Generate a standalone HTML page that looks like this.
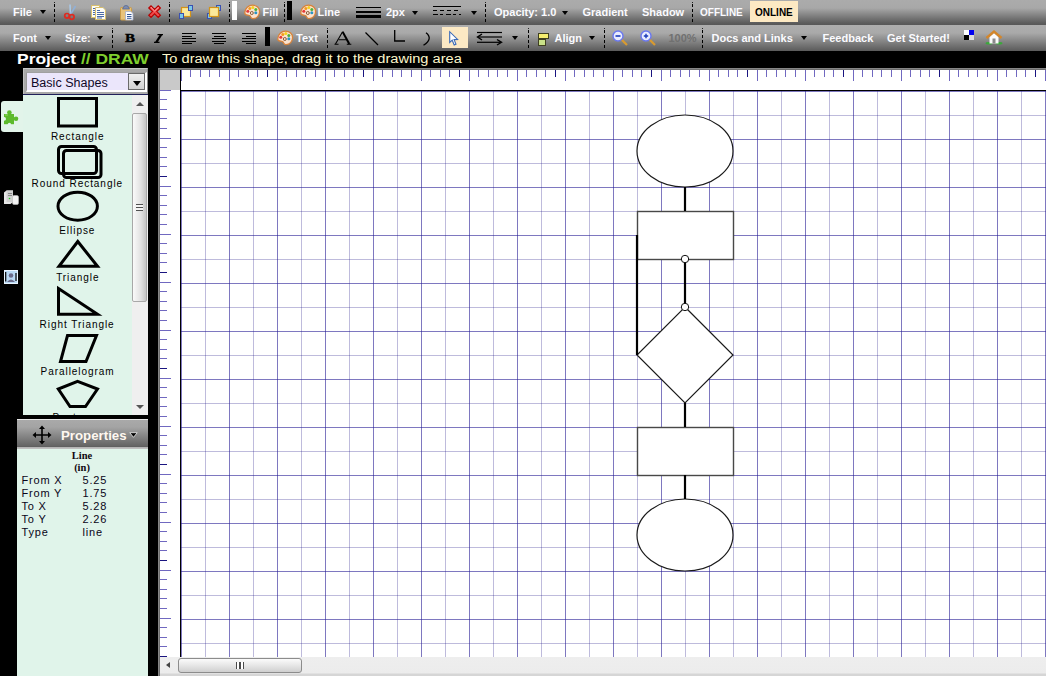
<!DOCTYPE html>
<html><head><meta charset="utf-8"><style>
*{margin:0;padding:0;box-sizing:border-box}
html,body{width:1046px;height:676px;overflow:hidden;background:#000;font-family:"Liberation Sans",sans-serif;position:relative}
.a{position:absolute}
.tb{position:absolute;left:0;width:1046px}
#tb1{top:0;height:25px;background:linear-gradient(#ababab 0px,#a8a8a8 8px,#5c5c5c 23px,#575757 25px)}
#tb2{top:25px;height:26px;background:linear-gradient(#adadad 0px,#a9a9a9 8px,#636363 24px,#5a5a5a 26px)}
.t{position:absolute;font-weight:bold;font-size:11px;color:#fbfbff;white-space:nowrap;line-height:13px}
.dd{position:absolute;width:0;height:0;border-left:3.5px solid transparent;border-right:3.5px solid transparent;border-top:4px solid #000}
.sep{position:absolute;width:1px;background:repeating-linear-gradient(#000 0 2px,rgba(0,0,0,0) 2px 4px)}
svg{position:absolute;overflow:visible}
.lbl{position:absolute;font-size:10px;letter-spacing:0.95px;color:#000;white-space:nowrap;line-height:11px;text-align:center}
.pr{position:absolute;font-size:11px;color:#0a0418;white-space:nowrap;line-height:13px;letter-spacing:0.8px}
</style></head><body>
<div class="tb" id="tb1"></div><div class="tb" id="tb2"></div>
<div class="a" style="left:158px;top:68px;width:888px;height:608px;background:#6e6e6e;border-left:1px solid #868686;border-top:1px solid #868686"></div><div class="a" style="left:160px;top:70px;width:20px;height:20px;background:#c9c9c9"></div><div class="a" style="left:180px;top:70px;width:866px;height:20px;background:#fff"></div><div class="a" style="left:160px;top:90px;width:20px;height:567px;background:#fff"></div><div class="a" style="left:180px;top:90px;width:866px;height:567px;background:#fff"></div><svg class="a" style="left:0;top:0" width="1046" height="676" shape-rendering="crispEdges"><rect x="181" y="91" width="1" height="566" fill="rgba(40,30,150,0.6)"/><rect x="205" y="91" width="1" height="566" fill="rgba(40,30,140,0.3)"/><rect x="229" y="91" width="1" height="566" fill="rgba(40,30,150,0.6)"/><rect x="253" y="91" width="1" height="566" fill="rgba(40,30,140,0.3)"/><rect x="277" y="91" width="1" height="566" fill="rgba(40,30,150,0.6)"/><rect x="301" y="91" width="1" height="566" fill="rgba(40,30,140,0.3)"/><rect x="325" y="91" width="1" height="566" fill="rgba(40,30,150,0.6)"/><rect x="349" y="91" width="1" height="566" fill="rgba(40,30,140,0.3)"/><rect x="373" y="91" width="1" height="566" fill="rgba(40,30,150,0.6)"/><rect x="397" y="91" width="1" height="566" fill="rgba(40,30,140,0.3)"/><rect x="421" y="91" width="1" height="566" fill="rgba(40,30,150,0.6)"/><rect x="445" y="91" width="1" height="566" fill="rgba(40,30,140,0.3)"/><rect x="469" y="91" width="1" height="566" fill="rgba(40,30,150,0.6)"/><rect x="493" y="91" width="1" height="566" fill="rgba(40,30,140,0.3)"/><rect x="517" y="91" width="1" height="566" fill="rgba(40,30,150,0.6)"/><rect x="541" y="91" width="1" height="566" fill="rgba(40,30,140,0.3)"/><rect x="565" y="91" width="1" height="566" fill="rgba(40,30,150,0.6)"/><rect x="589" y="91" width="1" height="566" fill="rgba(40,30,140,0.3)"/><rect x="613" y="91" width="1" height="566" fill="rgba(40,30,150,0.6)"/><rect x="637" y="91" width="1" height="566" fill="rgba(40,30,140,0.3)"/><rect x="661" y="91" width="1" height="566" fill="rgba(40,30,150,0.6)"/><rect x="685" y="91" width="1" height="566" fill="rgba(40,30,140,0.3)"/><rect x="709" y="91" width="1" height="566" fill="rgba(40,30,150,0.6)"/><rect x="733" y="91" width="1" height="566" fill="rgba(40,30,140,0.3)"/><rect x="757" y="91" width="1" height="566" fill="rgba(40,30,150,0.6)"/><rect x="781" y="91" width="1" height="566" fill="rgba(40,30,140,0.3)"/><rect x="805" y="91" width="1" height="566" fill="rgba(40,30,150,0.6)"/><rect x="829" y="91" width="1" height="566" fill="rgba(40,30,140,0.3)"/><rect x="853" y="91" width="1" height="566" fill="rgba(40,30,150,0.6)"/><rect x="877" y="91" width="1" height="566" fill="rgba(40,30,140,0.3)"/><rect x="901" y="91" width="1" height="566" fill="rgba(40,30,150,0.6)"/><rect x="925" y="91" width="1" height="566" fill="rgba(40,30,140,0.3)"/><rect x="949" y="91" width="1" height="566" fill="rgba(40,30,150,0.6)"/><rect x="973" y="91" width="1" height="566" fill="rgba(40,30,140,0.3)"/><rect x="997" y="91" width="1" height="566" fill="rgba(40,30,150,0.6)"/><rect x="1021" y="91" width="1" height="566" fill="rgba(40,30,140,0.3)"/><rect x="1045" y="91" width="1" height="566" fill="rgba(40,30,150,0.6)"/><rect x="181" y="91" width="865" height="1" fill="rgba(40,30,150,0.6)"/><rect x="181" y="115" width="865" height="1" fill="rgba(40,30,140,0.3)"/><rect x="181" y="139" width="865" height="1" fill="rgba(40,30,150,0.6)"/><rect x="181" y="163" width="865" height="1" fill="rgba(40,30,140,0.3)"/><rect x="181" y="187" width="865" height="1" fill="rgba(40,30,150,0.6)"/><rect x="181" y="211" width="865" height="1" fill="rgba(40,30,140,0.3)"/><rect x="181" y="235" width="865" height="1" fill="rgba(40,30,150,0.6)"/><rect x="181" y="259" width="865" height="1" fill="rgba(40,30,140,0.3)"/><rect x="181" y="283" width="865" height="1" fill="rgba(40,30,150,0.6)"/><rect x="181" y="307" width="865" height="1" fill="rgba(40,30,140,0.3)"/><rect x="181" y="331" width="865" height="1" fill="rgba(40,30,150,0.6)"/><rect x="181" y="355" width="865" height="1" fill="rgba(40,30,140,0.3)"/><rect x="181" y="379" width="865" height="1" fill="rgba(40,30,150,0.6)"/><rect x="181" y="403" width="865" height="1" fill="rgba(40,30,140,0.3)"/><rect x="181" y="427" width="865" height="1" fill="rgba(40,30,150,0.6)"/><rect x="181" y="451" width="865" height="1" fill="rgba(40,30,140,0.3)"/><rect x="181" y="475" width="865" height="1" fill="rgba(40,30,150,0.6)"/><rect x="181" y="499" width="865" height="1" fill="rgba(40,30,140,0.3)"/><rect x="181" y="523" width="865" height="1" fill="rgba(40,30,150,0.6)"/><rect x="181" y="547" width="865" height="1" fill="rgba(40,30,140,0.3)"/><rect x="181" y="571" width="865" height="1" fill="rgba(40,30,150,0.6)"/><rect x="181" y="595" width="865" height="1" fill="rgba(40,30,140,0.3)"/><rect x="181" y="619" width="865" height="1" fill="rgba(40,30,150,0.6)"/><rect x="181" y="643" width="865" height="1" fill="rgba(40,30,140,0.3)"/><rect x="181" y="70" width="1" height="11" fill="#7068c0"/><rect x="190" y="70" width="1" height="7" fill="#7068c0"/><rect x="200" y="70" width="1" height="7" fill="#7068c0"/><rect x="209" y="70" width="1" height="7" fill="#7068c0"/><rect x="219" y="70" width="1" height="7" fill="#7068c0"/><rect x="229" y="70" width="1" height="11" fill="#7068c0"/><rect x="238" y="70" width="1" height="7" fill="#7068c0"/><rect x="248" y="70" width="1" height="7" fill="#7068c0"/><rect x="257" y="70" width="1" height="7" fill="#7068c0"/><rect x="267" y="70" width="1" height="7" fill="#1a1480"/><rect x="277" y="70" width="1" height="11" fill="#7068c0"/><rect x="286" y="70" width="1" height="7" fill="#7068c0"/><rect x="296" y="70" width="1" height="7" fill="#7068c0"/><rect x="305" y="70" width="1" height="7" fill="#7068c0"/><rect x="315" y="70" width="1" height="7" fill="#7068c0"/><rect x="325" y="70" width="1" height="11" fill="#7068c0"/><rect x="334" y="70" width="1" height="7" fill="#7068c0"/><rect x="344" y="70" width="1" height="7" fill="#7068c0"/><rect x="353" y="70" width="1" height="7" fill="#7068c0"/><rect x="363" y="70" width="1" height="7" fill="#1a1480"/><rect x="373" y="70" width="1" height="11" fill="#7068c0"/><rect x="382" y="70" width="1" height="7" fill="#7068c0"/><rect x="392" y="70" width="1" height="7" fill="#7068c0"/><rect x="401" y="70" width="1" height="7" fill="#7068c0"/><rect x="411" y="70" width="1" height="7" fill="#7068c0"/><rect x="421" y="70" width="1" height="11" fill="#7068c0"/><rect x="430" y="70" width="1" height="7" fill="#7068c0"/><rect x="440" y="70" width="1" height="7" fill="#7068c0"/><rect x="449" y="70" width="1" height="7" fill="#7068c0"/><rect x="459" y="70" width="1" height="7" fill="#1a1480"/><rect x="469" y="70" width="1" height="11" fill="#7068c0"/><rect x="478" y="70" width="1" height="7" fill="#7068c0"/><rect x="488" y="70" width="1" height="7" fill="#7068c0"/><rect x="497" y="70" width="1" height="7" fill="#7068c0"/><rect x="507" y="70" width="1" height="7" fill="#7068c0"/><rect x="517" y="70" width="1" height="11" fill="#7068c0"/><rect x="526" y="70" width="1" height="7" fill="#7068c0"/><rect x="536" y="70" width="1" height="7" fill="#7068c0"/><rect x="545" y="70" width="1" height="7" fill="#7068c0"/><rect x="555" y="70" width="1" height="7" fill="#1a1480"/><rect x="565" y="70" width="1" height="11" fill="#7068c0"/><rect x="574" y="70" width="1" height="7" fill="#7068c0"/><rect x="584" y="70" width="1" height="7" fill="#7068c0"/><rect x="593" y="70" width="1" height="7" fill="#7068c0"/><rect x="603" y="70" width="1" height="7" fill="#7068c0"/><rect x="613" y="70" width="1" height="11" fill="#7068c0"/><rect x="622" y="70" width="1" height="7" fill="#7068c0"/><rect x="632" y="70" width="1" height="7" fill="#7068c0"/><rect x="641" y="70" width="1" height="7" fill="#7068c0"/><rect x="651" y="70" width="1" height="7" fill="#1a1480"/><rect x="661" y="70" width="1" height="11" fill="#7068c0"/><rect x="670" y="70" width="1" height="7" fill="#7068c0"/><rect x="680" y="70" width="1" height="7" fill="#7068c0"/><rect x="689" y="70" width="1" height="7" fill="#7068c0"/><rect x="699" y="70" width="1" height="7" fill="#7068c0"/><rect x="709" y="70" width="1" height="11" fill="#7068c0"/><rect x="718" y="70" width="1" height="7" fill="#7068c0"/><rect x="728" y="70" width="1" height="7" fill="#7068c0"/><rect x="737" y="70" width="1" height="7" fill="#7068c0"/><rect x="747" y="70" width="1" height="7" fill="#1a1480"/><rect x="757" y="70" width="1" height="11" fill="#7068c0"/><rect x="766" y="70" width="1" height="7" fill="#7068c0"/><rect x="776" y="70" width="1" height="7" fill="#7068c0"/><rect x="785" y="70" width="1" height="7" fill="#7068c0"/><rect x="795" y="70" width="1" height="7" fill="#7068c0"/><rect x="805" y="70" width="1" height="11" fill="#7068c0"/><rect x="814" y="70" width="1" height="7" fill="#7068c0"/><rect x="824" y="70" width="1" height="7" fill="#7068c0"/><rect x="833" y="70" width="1" height="7" fill="#7068c0"/><rect x="843" y="70" width="1" height="7" fill="#1a1480"/><rect x="853" y="70" width="1" height="11" fill="#7068c0"/><rect x="862" y="70" width="1" height="7" fill="#7068c0"/><rect x="872" y="70" width="1" height="7" fill="#7068c0"/><rect x="881" y="70" width="1" height="7" fill="#7068c0"/><rect x="891" y="70" width="1" height="7" fill="#7068c0"/><rect x="901" y="70" width="1" height="11" fill="#7068c0"/><rect x="910" y="70" width="1" height="7" fill="#7068c0"/><rect x="920" y="70" width="1" height="7" fill="#7068c0"/><rect x="929" y="70" width="1" height="7" fill="#7068c0"/><rect x="939" y="70" width="1" height="7" fill="#1a1480"/><rect x="949" y="70" width="1" height="11" fill="#7068c0"/><rect x="958" y="70" width="1" height="7" fill="#7068c0"/><rect x="968" y="70" width="1" height="7" fill="#7068c0"/><rect x="977" y="70" width="1" height="7" fill="#7068c0"/><rect x="987" y="70" width="1" height="7" fill="#7068c0"/><rect x="997" y="70" width="1" height="11" fill="#7068c0"/><rect x="1006" y="70" width="1" height="7" fill="#7068c0"/><rect x="1016" y="70" width="1" height="7" fill="#7068c0"/><rect x="1025" y="70" width="1" height="7" fill="#7068c0"/><rect x="1035" y="70" width="1" height="7" fill="#1a1480"/><rect x="1045" y="70" width="1" height="11" fill="#7068c0"/><rect x="160" y="90" width="11" height="1" fill="#7068c0"/><rect x="160" y="99" width="7" height="1" fill="#7068c0"/><rect x="160" y="109" width="7" height="1" fill="#7068c0"/><rect x="160" y="118" width="7" height="1" fill="#7068c0"/><rect x="160" y="128" width="7" height="1" fill="#7068c0"/><rect x="160" y="138" width="11" height="1" fill="#7068c0"/><rect x="160" y="147" width="7" height="1" fill="#7068c0"/><rect x="160" y="157" width="7" height="1" fill="#7068c0"/><rect x="160" y="166" width="7" height="1" fill="#7068c0"/><rect x="160" y="176" width="7" height="1" fill="#1a1480"/><rect x="160" y="186" width="11" height="1" fill="#7068c0"/><rect x="160" y="195" width="7" height="1" fill="#7068c0"/><rect x="160" y="205" width="7" height="1" fill="#7068c0"/><rect x="160" y="214" width="7" height="1" fill="#7068c0"/><rect x="160" y="224" width="7" height="1" fill="#7068c0"/><rect x="160" y="234" width="11" height="1" fill="#7068c0"/><rect x="160" y="243" width="7" height="1" fill="#7068c0"/><rect x="160" y="253" width="7" height="1" fill="#7068c0"/><rect x="160" y="262" width="7" height="1" fill="#7068c0"/><rect x="160" y="272" width="7" height="1" fill="#1a1480"/><rect x="160" y="282" width="11" height="1" fill="#7068c0"/><rect x="160" y="291" width="7" height="1" fill="#7068c0"/><rect x="160" y="301" width="7" height="1" fill="#7068c0"/><rect x="160" y="310" width="7" height="1" fill="#7068c0"/><rect x="160" y="320" width="7" height="1" fill="#7068c0"/><rect x="160" y="330" width="11" height="1" fill="#7068c0"/><rect x="160" y="339" width="7" height="1" fill="#7068c0"/><rect x="160" y="349" width="7" height="1" fill="#7068c0"/><rect x="160" y="358" width="7" height="1" fill="#7068c0"/><rect x="160" y="368" width="7" height="1" fill="#1a1480"/><rect x="160" y="378" width="11" height="1" fill="#7068c0"/><rect x="160" y="387" width="7" height="1" fill="#7068c0"/><rect x="160" y="397" width="7" height="1" fill="#7068c0"/><rect x="160" y="406" width="7" height="1" fill="#7068c0"/><rect x="160" y="416" width="7" height="1" fill="#7068c0"/><rect x="160" y="426" width="11" height="1" fill="#7068c0"/><rect x="160" y="435" width="7" height="1" fill="#7068c0"/><rect x="160" y="445" width="7" height="1" fill="#7068c0"/><rect x="160" y="454" width="7" height="1" fill="#7068c0"/><rect x="160" y="464" width="7" height="1" fill="#1a1480"/><rect x="160" y="474" width="11" height="1" fill="#7068c0"/><rect x="160" y="483" width="7" height="1" fill="#7068c0"/><rect x="160" y="493" width="7" height="1" fill="#7068c0"/><rect x="160" y="502" width="7" height="1" fill="#7068c0"/><rect x="160" y="512" width="7" height="1" fill="#7068c0"/><rect x="160" y="522" width="11" height="1" fill="#7068c0"/><rect x="160" y="531" width="7" height="1" fill="#7068c0"/><rect x="160" y="541" width="7" height="1" fill="#7068c0"/><rect x="160" y="550" width="7" height="1" fill="#7068c0"/><rect x="160" y="560" width="7" height="1" fill="#1a1480"/><rect x="160" y="570" width="11" height="1" fill="#7068c0"/><rect x="160" y="579" width="7" height="1" fill="#7068c0"/><rect x="160" y="589" width="7" height="1" fill="#7068c0"/><rect x="160" y="598" width="7" height="1" fill="#7068c0"/><rect x="160" y="608" width="7" height="1" fill="#7068c0"/><rect x="160" y="618" width="11" height="1" fill="#7068c0"/><rect x="160" y="627" width="7" height="1" fill="#7068c0"/><rect x="160" y="637" width="7" height="1" fill="#7068c0"/><rect x="160" y="646" width="7" height="1" fill="#7068c0"/><rect x="160" y="656" width="7" height="1" fill="#1a1480"/><rect x="180" y="70" width="1" height="587" fill="#000"/><rect x="180" y="90" width="866" height="1" fill="#000"/></svg><svg class="a" style="left:0;top:0" width="1046" height="676"><g fill="#fff" stroke="#1a1a1a" stroke-width="1.2"><ellipse cx="685" cy="151" rx="48" ry="36"/><ellipse cx="685" cy="535" rx="48" ry="36"/><polygon points="685,307 733,355 685,403 637,355"/></g><g fill="#fff" stroke="#484848" stroke-width="1.4"><rect x="637.5" y="211.5" width="96" height="48"/><rect x="637.5" y="427.5" width="96" height="48"/></g><g stroke="#000" stroke-width="2.2" fill="none"><line x1="685" y1="187" x2="685" y2="211"/><line x1="685" y1="259" x2="685" y2="307"/><line x1="637" y1="235" x2="637" y2="355"/><line x1="685" y1="403" x2="685" y2="427"/><line x1="685" y1="475" x2="685" y2="499"/></g><g fill="#fff" stroke="#111" stroke-width="1"><circle cx="685" cy="259" r="3.7"/><circle cx="685" cy="307" r="3.7"/></g></svg><div class="a" style="left:160px;top:657px;width:886px;height:19px;background:linear-gradient(#eeeeee 0,#ececec 16px,#d6d6d6 17px,#d6d6d6 19px)"></div><div class="a" style="left:166px;top:662px;width:0;height:0;border-top:3.5px solid transparent;border-bottom:3.5px solid transparent;border-right:4px solid #444"></div><div class="a" style="left:178px;top:658px;width:124px;height:15px;border:1px solid #8c8c8c;border-radius:3px;background:linear-gradient(#fbfbfb,#e6e6e6 50%,#cfcfcf)"></div><div class="a" style="left:236px;top:662px;width:8px;height:7px;background:repeating-linear-gradient(90deg,#4a4a4a 0 1.5px,#fff 1.5px 3.3px)"></div>
<div class="t" style="left:13px;top:5.5px;">File</div><div class="dd" style="left:39.5px;top:10px"></div><div class="a" style="left:54px;top:2px;width:1px;height:1px;background:#222"></div><div class="a" style="left:54px;top:4px;width:1px;height:3px;background:#000"></div><div class="a" style="left:54px;top:9px;width:1px;height:3px;background:#000"></div><div class="a" style="left:54px;top:14px;width:1px;height:3px;background:#000"></div><div class="a" style="left:54px;top:19px;width:1px;height:3px;background:#000"></div><svg style="left:64px;top:4px" width="13" height="16" viewBox="0 0 13 16"><path d="M6 0.5 L6.5 11" stroke="#a8c8e8" stroke-width="1.6"/><path d="M11.5 2 L6.5 10.5" stroke="#8fb0d8" stroke-width="1.6"/><circle cx="3" cy="11.8" r="2.3" fill="none" stroke="#e02a20" stroke-width="1.7"/><circle cx="7.8" cy="13" r="2.3" fill="none" stroke="#e02a20" stroke-width="1.7"/></svg><svg style="left:91px;top:5px" width="15" height="15" viewBox="0 0 15 15"><rect x="0.5" y="0.5" width="8" height="12" fill="#fdfdf6" stroke="#d8c070" stroke-width="1"/><path d="M4.5 2.5 H12 L14.5 5 V14.5 H4.5 Z" fill="#fdfdf6" stroke="#d8c070" stroke-width="1"/><path d="M2 3.5H4M2 5.5H4M2 7.5H4M2 9.5H4M6 5.5H9M6 7.5H13M6 9.5H13M6 11.5H13M6 13H11" stroke="#4a6aa8" stroke-width="1"/></svg><svg style="left:120px;top:5px" width="14" height="16" viewBox="0 0 14 16"><rect x="0.5" y="2.5" width="11" height="12.5" rx="1" fill="#e8c27a" stroke="#c89a48" stroke-width="1"/><path d="M3.5 2.5 Q3.5 0.5 6 0.5 Q8.5 0.5 8.5 2.5 L9.5 4 H2.5 Z" fill="#7c8cb0" stroke="#5a6a90" stroke-width="0.8"/><path d="M5.5 6.5 H11 L13 8.5 V15 H5.5 Z" fill="#fafcff" stroke="#a8b0c8" stroke-width="0.8"/><path d="M7 9.5H11.5M7 11.5H11.5M7 13.3H11.5" stroke="#3a5a98" stroke-width="1"/></svg><svg style="left:148px;top:5px" width="14" height="14" viewBox="0 0 14 14"><path d="M0.8 3 L3 0.8 L6.6 4.4 L10.2 0.8 L12.4 3 L8.8 6.6 L12.4 10.2 L10.2 12.4 L6.6 8.8 L3 12.4 L0.8 10.2 L4.4 6.6 Z" fill="#f04a4a" stroke="#b80000" stroke-width="1.2"/><path d="M2.5 3 L3 2.5 L6.6 6 L10.2 2.5 L10.8 3" fill="none" stroke="#ffb0b0" stroke-width="1"/></svg><div class="a" style="left:169px;top:2px;width:1px;height:1px;background:#222"></div><div class="a" style="left:169px;top:4px;width:1px;height:3px;background:#000"></div><div class="a" style="left:169px;top:9px;width:1px;height:3px;background:#000"></div><div class="a" style="left:169px;top:14px;width:1px;height:3px;background:#000"></div><div class="a" style="left:169px;top:19px;width:1px;height:3px;background:#000"></div><svg style="left:179px;top:5px" width="15" height="15" viewBox="0 0 15 15"><rect x="2.5" y="2.5" width="9" height="9" fill="#fbe89a" stroke="#d49418" stroke-width="1.2"/><rect x="9.5" y="0.5" width="4" height="5" fill="#7ac8e8" stroke="#3a50b0" stroke-width="1"/><rect x="0.5" y="8.5" width="4" height="5" fill="#7ac8e8" stroke="#3a50b0" stroke-width="1"/></svg><svg style="left:207px;top:5px" width="15" height="15" viewBox="0 0 15 15"><rect x="9.5" y="0.5" width="4" height="5" fill="#7ac8e8" stroke="#3a50b0" stroke-width="1"/><rect x="0.5" y="8.5" width="4" height="5" fill="#7ac8e8" stroke="#3a50b0" stroke-width="1"/><rect x="2.5" y="2.5" width="9" height="9" fill="#fbe89a" stroke="#d49418" stroke-width="1.2"/></svg><div class="a" style="left:229px;top:2px;width:1px;height:1px;background:#222"></div><div class="a" style="left:229px;top:4px;width:1px;height:3px;background:#000"></div><div class="a" style="left:229px;top:9px;width:1px;height:3px;background:#000"></div><div class="a" style="left:229px;top:14px;width:1px;height:3px;background:#000"></div><div class="a" style="left:229px;top:19px;width:1px;height:3px;background:#000"></div><div class="a" style="left:232px;top:1px;width:5px;height:19px;background:#fff"></div><svg style="left:244px;top:4px" width="16" height="15" viewBox="0 0 16 15"><path d="M8.5 1.2 C12.8 1.2 15.6 4 15.6 7.6 C15.6 11.6 12.8 14.6 9 14.6 C7.2 14.6 6.8 13.2 6.2 12.2 C5.5 11.1 4 11.3 2.6 11 C1.2 10.7 0.6 9.8 0.8 8.4 C1.2 4.4 4.4 1.2 8.5 1.2 Z" fill="#fbe3cf" stroke="#d8833a" stroke-width="1.3"/><circle cx="3.8" cy="7.2" r="1.5" fill="#e63a3a"/><circle cx="5.8" cy="4.6" r="1.5" fill="#f39a1e"/><circle cx="8.8" cy="3.5" r="1.5" fill="#f3d21e"/><circle cx="11.8" cy="5.5" r="1.5" fill="#4fb23a"/><circle cx="11.8" cy="8.8" r="1.5" fill="#2a95c8"/><circle cx="7.8" cy="9" r="1.5" fill="#fbe3cf" stroke="#8a5a3a" stroke-width="1"/></svg><div class="t" style="left:262.5px;top:5.5px;">Fill</div><div class="a" style="left:284px;top:2px;width:1px;height:1px;background:#222"></div><div class="a" style="left:284px;top:4px;width:1px;height:3px;background:#000"></div><div class="a" style="left:284px;top:9px;width:1px;height:3px;background:#000"></div><div class="a" style="left:284px;top:14px;width:1px;height:3px;background:#000"></div><div class="a" style="left:284px;top:19px;width:1px;height:3px;background:#000"></div><div class="a" style="left:287px;top:1px;width:5px;height:19px;background:#000"></div><svg style="left:299.5px;top:4px" width="16" height="15" viewBox="0 0 16 15"><path d="M8.5 1.2 C12.8 1.2 15.6 4 15.6 7.6 C15.6 11.6 12.8 14.6 9 14.6 C7.2 14.6 6.8 13.2 6.2 12.2 C5.5 11.1 4 11.3 2.6 11 C1.2 10.7 0.6 9.8 0.8 8.4 C1.2 4.4 4.4 1.2 8.5 1.2 Z" fill="#fbe3cf" stroke="#d8833a" stroke-width="1.3"/><circle cx="3.8" cy="7.2" r="1.5" fill="#e63a3a"/><circle cx="5.8" cy="4.6" r="1.5" fill="#f39a1e"/><circle cx="8.8" cy="3.5" r="1.5" fill="#f3d21e"/><circle cx="11.8" cy="5.5" r="1.5" fill="#4fb23a"/><circle cx="11.8" cy="8.8" r="1.5" fill="#2a95c8"/><circle cx="7.8" cy="9" r="1.5" fill="#fbe3cf" stroke="#8a5a3a" stroke-width="1"/></svg><div class="t" style="left:317.5px;top:5.5px;">Line</div><div class="a" style="left:356px;top:7px;width:25px;height:1px;background:#000"></div><div class="a" style="left:356px;top:11px;width:25px;height:2px;background:#000"></div><div class="a" style="left:356px;top:15px;width:25px;height:3px;background:#000"></div><div class="t" style="left:386px;top:5.5px;">2px</div><div class="dd" style="left:412px;top:10.5px"></div><div class="a" style="left:433px;top:6px;width:28px;height:1px;background:#000"></div><div class="a" style="left:433px;top:10px;width:28px;height:1px;background:repeating-linear-gradient(90deg,#000 0 4px,transparent 4px 7px)"></div><div class="a" style="left:433px;top:14px;width:28px;height:1px;background:repeating-linear-gradient(90deg,#000 0 5px,transparent 5px 7px,#000 7px 10px,transparent 10px 13px)"></div><div class="dd" style="left:470.5px;top:10.5px"></div><div class="a" style="left:485px;top:2px;width:1px;height:1px;background:#222"></div><div class="a" style="left:485px;top:4px;width:1px;height:3px;background:#000"></div><div class="a" style="left:485px;top:9px;width:1px;height:3px;background:#000"></div><div class="a" style="left:485px;top:14px;width:1px;height:3px;background:#000"></div><div class="a" style="left:485px;top:19px;width:1px;height:3px;background:#000"></div><div class="t" style="left:494px;top:5.5px;">Opacity: 1.0</div><div class="dd" style="left:561.5px;top:10.5px"></div><div class="t" style="left:582.5px;top:5.5px;">Gradient</div><div class="t" style="left:642px;top:5.5px;">Shadow</div><div class="a" style="left:692px;top:2px;width:1px;height:1px;background:#222"></div><div class="a" style="left:692px;top:4px;width:1px;height:3px;background:#000"></div><div class="a" style="left:692px;top:9px;width:1px;height:3px;background:#000"></div><div class="a" style="left:692px;top:14px;width:1px;height:3px;background:#000"></div><div class="a" style="left:692px;top:19px;width:1px;height:3px;background:#000"></div><div class="t" style="left:700px;top:5.5px;font-size:10px;letter-spacing:0">OFFLINE</div><div class="a" style="left:750px;top:1px;width:48px;height:21px;background:#fde9c3"></div><div class="t" style="left:755px;top:5.5px;font-size:10px;color:#000">ONLINE</div><div class="t" style="left:13px;top:32.3px;">Font</div><div class="dd" style="left:44.5px;top:36px"></div><div class="t" style="left:65px;top:32.3px;">Size:</div><div class="dd" style="left:97px;top:36px"></div><div class="a" style="left:112px;top:28px;width:1px;height:1px;background:#222"></div><div class="a" style="left:112px;top:30px;width:1px;height:3px;background:#000"></div><div class="a" style="left:112px;top:35px;width:1px;height:3px;background:#000"></div><div class="a" style="left:112px;top:40px;width:1px;height:3px;background:#000"></div><div class="a" style="left:112px;top:45px;width:1px;height:3px;background:#000"></div><div class="a" style="left:124.5px;top:30.5px;font:bold 12.5px 'Liberation Serif',serif;color:#000;-webkit-text-stroke:0.4px #000;line-height:14px;transform:scaleX(1.2);transform-origin:0 0">B</div><svg style="left:153px;top:34px" width="11" height="10" viewBox="0 0 11 10"><path d="M4.5 0.6 H10 M1 8.4 H6.5" stroke="#000" stroke-width="1.3"/><path d="M8.2 0.6 L3.2 8.4" stroke="#000" stroke-width="2.2"/></svg><div class="a" style="left:182px;top:33px;width:14px;height:1px;background:#000"></div><div class="a" style="left:182px;top:36px;width:10px;height:1px;background:#000"></div><div class="a" style="left:182px;top:38px;width:14px;height:1px;background:#000"></div><div class="a" style="left:182px;top:41px;width:14px;height:1px;background:#000"></div><div class="a" style="left:182px;top:43px;width:10px;height:1px;background:#000"></div><div class="a" style="left:212.0px;top:33px;width:14px;height:1px;background:#000"></div><div class="a" style="left:214.0px;top:36px;width:10px;height:1px;background:#000"></div><div class="a" style="left:212.0px;top:38px;width:14px;height:1px;background:#000"></div><div class="a" style="left:212.0px;top:41px;width:14px;height:1px;background:#000"></div><div class="a" style="left:214.0px;top:43px;width:10px;height:1px;background:#000"></div><div class="a" style="left:242px;top:33px;width:14px;height:1px;background:#000"></div><div class="a" style="left:246px;top:36px;width:10px;height:1px;background:#000"></div><div class="a" style="left:242px;top:38px;width:14px;height:1px;background:#000"></div><div class="a" style="left:242px;top:41px;width:14px;height:1px;background:#000"></div><div class="a" style="left:246px;top:43px;width:10px;height:1px;background:#000"></div><div class="a" style="left:265px;top:27px;width:5px;height:19px;background:#000"></div><svg style="left:277px;top:29.5px" width="16" height="15" viewBox="0 0 16 15"><path d="M8.5 1.2 C12.8 1.2 15.6 4 15.6 7.6 C15.6 11.6 12.8 14.6 9 14.6 C7.2 14.6 6.8 13.2 6.2 12.2 C5.5 11.1 4 11.3 2.6 11 C1.2 10.7 0.6 9.8 0.8 8.4 C1.2 4.4 4.4 1.2 8.5 1.2 Z" fill="#fbe3cf" stroke="#d8833a" stroke-width="1.3"/><circle cx="3.8" cy="7.2" r="1.5" fill="#e63a3a"/><circle cx="5.8" cy="4.6" r="1.5" fill="#f39a1e"/><circle cx="8.8" cy="3.5" r="1.5" fill="#f3d21e"/><circle cx="11.8" cy="5.5" r="1.5" fill="#4fb23a"/><circle cx="11.8" cy="8.8" r="1.5" fill="#2a95c8"/><circle cx="7.8" cy="9" r="1.5" fill="#fbe3cf" stroke="#8a5a3a" stroke-width="1"/></svg><div class="t" style="left:296px;top:32.3px;">Text</div><div class="a" style="left:326.5px;top:28px;width:1px;height:1px;background:#222"></div><div class="a" style="left:326.5px;top:30px;width:1px;height:3px;background:#000"></div><div class="a" style="left:326.5px;top:35px;width:1px;height:3px;background:#000"></div><div class="a" style="left:326.5px;top:40px;width:1px;height:3px;background:#000"></div><div class="a" style="left:326.5px;top:45px;width:1px;height:3px;background:#000"></div><svg style="left:334px;top:31px" width="18" height="14" viewBox="0 0 18 14"><path d="M1.5 13 L8.6 0.8" stroke="#000" stroke-width="1.1" fill="none"/><path d="M8.6 0.8 L15.3 13" stroke="#000" stroke-width="2" fill="none"/><path d="M4.8 8.8 H12.6 M0.5 13.2 H4.5 M12.8 13.2 H17.3" stroke="#000" stroke-width="1.1"/></svg><svg style="left:365px;top:32px" width="14" height="14"><line x1="0.5" y1="0.5" x2="13" y2="13" stroke="#000" stroke-width="1.3"/></svg><svg style="left:394px;top:30px" width="12" height="12"><path d="M0.7 0 V11 H11" fill="none" stroke="#000" stroke-width="1.3"/></svg><svg style="left:422px;top:32px" width="10" height="14"><path d="M4 0.8 Q11.5 6.5 1.5 13.3" fill="none" stroke="#000" stroke-width="1.3"/></svg><div class="a" style="left:442px;top:27px;width:26px;height:21px;background:#fce9c4"></div><svg style="left:449px;top:31px" width="10" height="15" viewBox="0 0 10 15"><path d="M0.7 0.7 L0.7 11.5 L3.2 9.2 L5.2 14 L7 13.2 L5.1 8.6 L8.6 8.4 Z" fill="#fff" stroke="#3a6ab8" stroke-width="1.1"/></svg><svg style="left:476px;top:31px" width="28" height="14" viewBox="0 0 28 14"><line x1="1" y1="1.5" x2="26" y2="1.5" stroke="#000" stroke-width="1.2"/><line x1="2" y1="6" x2="26" y2="6" stroke="#000" stroke-width="1.2"/><path d="M6 3 L1.5 6 L6 9" fill="none" stroke="#000" stroke-width="1.4"/><line x1="1" y1="11.3" x2="25" y2="11.3" stroke="#000" stroke-width="1.2"/><path d="M21 8.5 L25.5 11.3 L21 14" fill="none" stroke="#000" stroke-width="1.4"/></svg><div class="dd" style="left:512px;top:36px"></div><div class="a" style="left:528px;top:28px;width:1px;height:1px;background:#222"></div><div class="a" style="left:528px;top:30px;width:1px;height:3px;background:#000"></div><div class="a" style="left:528px;top:35px;width:1px;height:3px;background:#000"></div><div class="a" style="left:528px;top:40px;width:1px;height:3px;background:#000"></div><div class="a" style="left:528px;top:45px;width:1px;height:3px;background:#000"></div><div class="a" style="left:538px;top:33px;width:11px;height:6px;background:#f6ee70;border:1px solid #404020"></div><div class="a" style="left:538px;top:39px;width:8px;height:6.5px;background:#c8e088;border:1px solid #404020"></div><div class="t" style="left:554.5px;top:32.3px;">Align</div><div class="dd" style="left:589px;top:36px"></div><div class="a" style="left:604px;top:28px;width:1px;height:1px;background:#222"></div><div class="a" style="left:604px;top:30px;width:1px;height:3px;background:#000"></div><div class="a" style="left:604px;top:35px;width:1px;height:3px;background:#000"></div><div class="a" style="left:604px;top:40px;width:1px;height:3px;background:#000"></div><div class="a" style="left:604px;top:45px;width:1px;height:3px;background:#000"></div><svg style="left:611.5px;top:30px" width="17" height="16" viewBox="0 0 17 16"><line x1="9.5" y1="9.5" x2="15" y2="15" stroke="#d89a30" stroke-width="2.2"/><circle cx="6" cy="6" r="5" fill="#e8ecff" stroke="#6a78f0" stroke-width="1.4"/><path d="M3.5 6 H8.5" stroke="#1a3ab8" stroke-width="1.6"/></svg><svg style="left:639.5px;top:30px" width="17" height="16" viewBox="0 0 17 16"><line x1="9.5" y1="9.5" x2="15" y2="15" stroke="#d89a30" stroke-width="2.2"/><circle cx="6" cy="6" r="5" fill="#e8ecff" stroke="#6a78f0" stroke-width="1.4"/><path d="M3.8 6 H8.2 M6 3.8 V8.2" stroke="#1a3ab8" stroke-width="1.4"/></svg><div class="t" style="left:668.5px;top:32.3px;color:#707070">100%</div><div class="a" style="left:702px;top:28px;width:1px;height:1px;background:#222"></div><div class="a" style="left:702px;top:30px;width:1px;height:3px;background:#000"></div><div class="a" style="left:702px;top:35px;width:1px;height:3px;background:#000"></div><div class="a" style="left:702px;top:40px;width:1px;height:3px;background:#000"></div><div class="a" style="left:702px;top:45px;width:1px;height:3px;background:#000"></div><div class="t" style="left:711.5px;top:32.3px;">Docs and Links</div><div class="dd" style="left:801px;top:36px"></div><div class="t" style="left:822.5px;top:32.3px;">Feedback</div><div class="t" style="left:887px;top:32.3px;">Get Started!</div><div class="a" style="left:964px;top:30px;width:5px;height:5px;background:#fff"></div><div class="a" style="left:969px;top:30px;width:5px;height:5px;background:#0000f0"></div><div class="a" style="left:964px;top:35px;width:5px;height:5px;background:#000"></div><div class="a" style="left:969px;top:35px;width:5px;height:5px;background:#dedede"></div><svg style="left:985px;top:30px" width="18" height="15" viewBox="0 0 18 15"><ellipse cx="4" cy="13.3" rx="3.5" ry="1.3" fill="#3aa83a"/><ellipse cx="14" cy="13.3" rx="3.5" ry="1.3" fill="#3aa83a"/><path d="M4.5 7 L9 3 L13.5 7 V13.5 H4.5 Z" fill="#fafafa"/><rect x="7.5" y="8.5" width="3" height="5" fill="#8a8a8a"/><path d="M1.5 8 L9 1.5 L16.5 8" fill="none" stroke="#d4862a" stroke-width="2.4"/></svg>
<div class="a" style="left:17px;top:51.2px;font-weight:bold;font-size:15.3px;line-height:16px;color:#fff;white-space:nowrap;transform:scaleX(1.14);transform-origin:0 0">Project <span style="color:#7fcf2e">// DRAW</span></div><div class="a" style="left:162.3px;top:52px;font-size:12px;line-height:14px;color:#fdf8cc;white-space:nowrap;transform:scaleX(1.218);transform-origin:0 0">To draw this shape, drag it to the drawing area</div><div class="a" style="left:1px;top:101px;width:23px;height:31px;background:#e2f4ea;border-radius:3px 0 0 3px"></div><svg style="left:4px;top:109.5px" width="15" height="15" viewBox="0 0 15 15"><rect x="0" y="4" width="10" height="10.2" fill="#5cba2c"/><circle cx="5.4" cy="2.6" r="2.3" fill="#5cba2c"/><circle cx="12" cy="8.8" r="2.3" fill="#5cba2c"/><circle cx="0.2" cy="8.9" r="1.8" fill="#e2f4ea"/><circle cx="5.4" cy="14.4" r="1.7" fill="#e2f4ea"/><path d="M1 5 H4" stroke="#9ee070" stroke-width="0.8"/></svg><svg style="left:3px;top:190px" width="16" height="15" viewBox="0 0 16 15"><path d="M1 2.5 L3.5 0.5 H10 V12 L7.5 14 H1 Z" fill="#e6e6e6"/><rect x="3.5" y="0.5" width="6.5" height="11.5" fill="#cfcfcf"/><rect x="5" y="3" width="4" height="1" fill="#888"/><rect x="5" y="5" width="4" height="1" fill="#888"/><circle cx="6.5" cy="8.5" r="0.8" fill="#2c2"/><rect x="9.5" y="5.5" width="6" height="9" rx="1.5" fill="#f2f2f2" stroke="#bbb" stroke-width="0.6"/></svg><svg style="left:4px;top:270px" width="14" height="14" viewBox="0 0 14 14"><rect x="0.5" y="0.5" width="13" height="13" fill="#b8d8f4" stroke="#e8f4ff" stroke-width="1"/><path d="M1.7 2 V11.5 M12 3 V11" stroke="#000" stroke-width="1.2"/><circle cx="7" cy="5.5" r="2.3" fill="#6a6a8a"/><path d="M3 12 Q7 7 11 12 Z" fill="#6a6a8a"/></svg><div class="a" style="left:23px;top:68px;width:125px;height:26px;background:#a9a9a9;border-top:1px solid #c8c8c8;border-left:1px solid #c0c0c0;border-right:1px solid #8a8a8a"></div><div class="a" style="left:26px;top:72px;width:121px;height:20px;background:#ebe6fb;border-top:1px solid #a0a0a0;border-left:1px solid #9a9a9a;border-bottom:2px solid #fff;border-right:2px solid #fff"></div><div class="a" style="left:31px;top:76px;font-size:12px;line-height:14px;color:#100828;white-space:nowrap;transform:scaleX(1.045);transform-origin:0 0">Basic Shapes</div><div class="a" style="left:128px;top:73px;width:17px;height:17px;background:linear-gradient(#f0f0f0,#d2d2d2);border:1px solid #6a6a6a"></div><div class="dd" style="left:132.5px;top:81px;border-left-width:4px;border-right-width:4px;border-top-width:5px"></div><div class="a" style="left:23px;top:94px;width:125px;height:1px;background:#20205a"></div><div class="a" style="left:23px;top:95px;width:125px;height:320px;background:#e0f4ea;overflow:hidden"><svg style="left:-23px;top:-95px" width="1046" height="676"><g fill="none" stroke="#000" stroke-width="3" stroke-linejoin="miter"><rect x="58.5" y="98.5" width="38" height="27.5"/><rect x="58.5" y="146.5" width="38" height="27" rx="3"/><rect x="63.5" y="150.5" width="37.5" height="27" rx="3"/><ellipse cx="77.7" cy="206.2" rx="19.7" ry="14"/><polygon points="77.8,241.5 59,266.3 97.5,266.3"/><polygon points="58.5,288.5 58.5,314.2 97.5,314.2"/><polygon points="67.5,335.5 96.5,335.5 86,361.5 60.5,361.5"/><polygon points="77.6,381.3 97.5,389 85.5,406.5 70,406.5 58.3,389"/></g></svg><div class="lbl" style="left:-5.299999999999997px;top:36.10000000000001px;width:120px">Rectangle</div><div class="lbl" style="left:-5.700000000000003px;top:83.10000000000001px;width:120px">Round Rectangle</div><div class="lbl" style="left:-5.700000000000003px;top:129.9px;width:120px">Ellipse</div><div class="lbl" style="left:-5.200000000000003px;top:176.60000000000002px;width:120px">Triangle</div><div class="lbl" style="left:-5.900000000000006px;top:224.3px;width:120px">Right Triangle</div><div class="lbl" style="left:-5.400000000000006px;top:271.1px;width:120px">Parallelogram</div><div class="lbl" style="left:-5.400000000000006px;top:317.1px;width:120px">Pentagon</div><div class="a" style="left:109px;top:0;width:16px;height:320px;background:#efefef"></div><div class="a" style="left:116px;top:7px;width:0;height:0;border-left:4px solid transparent;border-right:4px solid transparent;border-bottom:4px solid #555;margin-left:-3px"></div><div class="a" style="left:109px;top:18px;width:15px;height:189px;border:1px solid #a8a8a8;border-radius:2px;background:linear-gradient(90deg,#fafafa,#e2e2e2 60%,#c4c4c4)"></div><div class="a" style="left:113px;top:109px;width:7px;height:7px;background:repeating-linear-gradient(#505050 0 1px,#f4f4f4 1px 3px)"></div><div class="a" style="left:116px;top:310px;width:0;height:0;border-left:4px solid transparent;border-right:4px solid transparent;border-top:4px solid #555;margin-left:-3px"></div></div><div class="a" style="left:17px;top:419px;width:131px;height:257px;background:#e0f4ea"></div><div class="a" style="left:17px;top:419px;width:131px;height:30px;background:linear-gradient(#e6e6e6 0,#e6e6e6 1px,#a9a9a9 1px,#a4a4a4 8px,#646464 27px,#5c5c5c 28px,#b0b0b0 28px,#c4c4c4 30px)"></div><svg style="left:32px;top:425px" width="20" height="20" viewBox="0 0 20 20"><path d="M10 2 V18 M2 10 H18" stroke="#000" stroke-width="1.6"/><path d="M10 0.5 L13 4 H7 Z M10 19.5 L13 16 H7 Z M0.5 10 L4 7 V13 Z M19.5 10 L16 7 V13 Z" fill="#000"/></svg><div class="a" style="left:61px;top:427.5px;font-weight:bold;font-size:13px;line-height:15px;color:#fff8f0;white-space:nowrap;transform:scaleX(1.02);transform-origin:0 0">Properties</div><svg style="left:129px;top:431.5px" width="9" height="6" viewBox="0 0 9 6"><path d="M0.8 0.7 H8.2 L4.5 5.3 Z" fill="#000" stroke="#f0f0f0" stroke-width="0.8"/></svg><div class="a" style="left:17px;top:449.5px;width:131px;text-align:center;font:bold 10.5px 'Liberation Serif',serif;line-height:12px;color:#100810;padding-right:1px">Line<br>(in)</div><div class="pr" style="left:21.5px;top:474.29999999999995px">From X</div><div class="pr" style="left:82.5px;top:474.29999999999995px">5.25</div><div class="pr" style="left:21.5px;top:487.19999999999993px">From Y</div><div class="pr" style="left:82.5px;top:487.19999999999993px">1.75</div><div class="pr" style="left:21.5px;top:500.09999999999997px">To X</div><div class="pr" style="left:82.5px;top:500.09999999999997px">5.28</div><div class="pr" style="left:21.5px;top:513.0px">To Y</div><div class="pr" style="left:82.5px;top:513.0px">2.26</div><div class="pr" style="left:21.5px;top:525.9px">Type</div><div class="pr" style="left:82.5px;top:525.9px">line</div>
</body></html>
